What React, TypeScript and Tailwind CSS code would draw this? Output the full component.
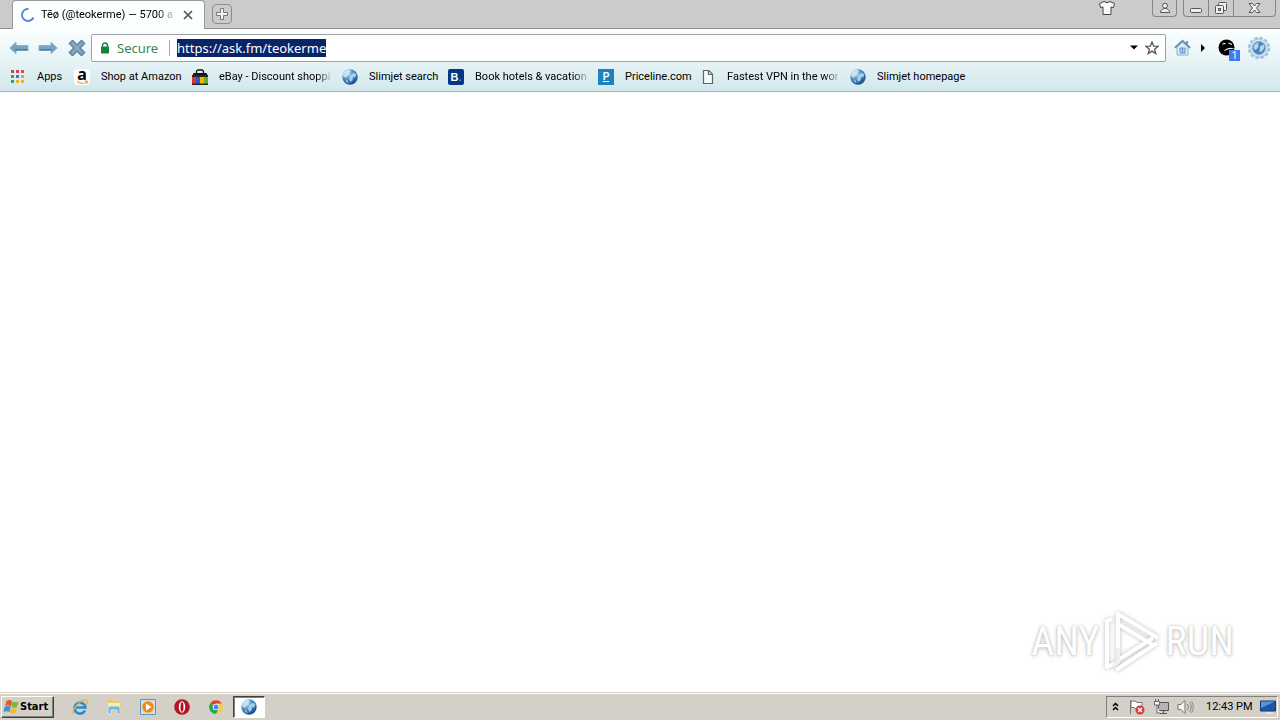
import React from "react";

const uiFont = "font-['Roboto','Noto_Sans',sans-serif]";

function Globe({ id }: { id: string }) {
  return (
    <svg width="16" height="16" viewBox="0 0 16 16" aria-hidden="true">
      <defs>
        <radialGradient id={id} cx="35%" cy="28%" r="80%">
          <stop offset="0" stopColor="#b9dcf2" />
          <stop offset="0.45" stopColor="#4f93cb" />
          <stop offset="1" stopColor="#123f7c" />
        </radialGradient>
      </defs>
      <circle cx="8" cy="8" r="7.7" fill={`url(#${id})`} />
      <path d="M1 5C2 2.5 4.500 .8 7 .6L9 2 7.500 3.500 8 5 5.500 6.500 4 8.500 1.500 8Z" fill="#d3e7f3" opacity=".85" />
      <path d="M8.500 6.500 12 3.500 14.500 5.500 13 8.500 11 8 10.500 11 8.500 13 7 10Z" fill="#c2deef" opacity=".8" />
      <path d="M3.500 10 6 11.500 6.500 14.500 4 13Z" fill="#9cc8e6" opacity=".7" />
    </svg>
  );
}

function AppsIcon() {
  const colors = ["#d6404e", "#d6404e", "#e04a3f", "#36a35c", "#3578e5", "#f0a818", "#36a35c", "#efb321", "#efb321"];
  return (
    <svg width="16" height="16" viewBox="0 0 16 16" aria-hidden="true">
      {colors.map((c, i) => (
        <rect key={i} x={1 + (i % 3) * 5} y={1 + Math.floor(i / 3) * 5} width="3" height="3" fill={c} />
      ))}
    </svg>
  );
}

function AmazonIcon() {
  return (
    <span className="relative flex size-4 justify-center rounded-sm bg-white">
      <span className="font-['Noto_Sans',sans-serif] text-[16px] leading-[10px] font-bold text-black">a</span>
      <svg className="absolute bottom-0 left-0" width="16" height="5" viewBox="0 0 16 5" aria-hidden="true">
        <path d="M3 1.500Q8 5 13 2M11 1l2.500.5-.6 2" fill="none" stroke="#f6a04b" strokeWidth="1.300" />
      </svg>
    </span>
  );
}

function BagIcon() {
  return (
    <svg width="16" height="16" viewBox="0 0 16 16" aria-hidden="true">
      <path d="M4.500 5V3Q4.500 1 6.500 1h3q2 0 2 2v2" fill="none" stroke="#111" strokeWidth="1.300" />
      <path d="M1.500 4h13L16 8H0z" fill="#151515" />
      <path d="M0 7h4v8H0z" fill="#e53238" />
      <path d="M4 7h4v8H4z" fill="#1d5fc8" />
      <path d="M8 7h4v8H8z" fill="#f5b400" />
      <path d="M12 7h4v8h-4z" fill="#6bac22" />
      <path d="M0 14.500h16V16H0zM0 6h16v2H0z" fill="#2b2720" />
    </svg>
  );
}

function BookingIcon() {
  return (
    <span className="flex size-4 items-center justify-center rounded-xs bg-[#043580] font-['Liberation_Sans',sans-serif] text-[11px] leading-4 font-bold text-white">
      B<span className="text-[#2f9de0]">.</span>
    </span>
  );
}

function PricelineIcon() {
  return (
    <span className="flex size-4 items-center justify-center bg-[#1a83bd] font-['Liberation_Sans',sans-serif] text-[10px] leading-4 font-bold text-white underline">
      P
    </span>
  );
}

function PageIcon() {
  return (
    <svg width="16" height="16" viewBox="0 0 16 16" aria-hidden="true">
      <path d="M3.500 1.500H9l3.500 3.700v9.300h-9zM8.500 1.500v4h4" fill="#f5fafa" stroke="#626666" strokeWidth="1.200" />
    </svg>
  );
}

function ArrowIcon() {
  return (
    <svg width="20" height="14" viewBox="0 0 20 14" aria-hidden="true">
      <path d="M.8 7 7 1.200V4.500H19v5H7v3.300Z" fill="#77a2c2" stroke="#8fb3cb" strokeLinejoin="round" />
      <path d="M6 8h12.500v1.500H6z" fill="#527f9f" />
    </svg>
  );
}

const fade = "[mask-image:linear-gradient(to_right,black_88%,#0003)]";

const bookmarks = [
  { label: "Apps", icon: <AppsIcon />, width: "w-16", fade: false },
  { label: "Shop at Amazon", icon: <AmazonIcon />, width: "w-[118px]", fade: false },
  { label: "eBay - Discount shoppi", icon: <BagIcon />, width: "w-[150px]", fade: true },
  { label: "Slimjet search", icon: <Globe id="g1" />, width: "w-[106px]", fade: false },
  { label: "Book hotels & vacation", icon: <BookingIcon />, width: "w-[150px]", fade: true },
  { label: "Priceline.com", icon: <PricelineIcon />, width: "w-[102px]", fade: false },
  { label: "Fastest VPN in the wor", icon: <PageIcon />, width: "w-[150px]", fade: true },
  { label: "Slimjet homepage", icon: <Globe id="g2" />, width: "w-[124px]", fade: false },
];

function TabStrip() {
  return (
    <header className="flex h-[29px] shrink-0 items-start bg-[#cbcbcb] shadow-[inset_0_-1px_0_#8e8e8e]">
      <div className="ml-3 flex h-[29px] w-[193px] items-center rounded-t border border-b-0 border-[#9a9a9a] bg-[#fcffff] pr-2 pl-[7px]">
        <svg width="16" height="16" viewBox="0 0 16 16" aria-hidden="true">
          <path d="M8.500 2A6 6 0 1 0 13.500 10.500" fill="none" stroke="#5b84dc" strokeWidth="2" />
        </svg>
        <span className="ml-[5px] flex w-[134px]">
          <span className={`text-[11px] leading-4 whitespace-nowrap ${fade}`}>Tēø (@teokerme) — 5700 a</span>
        </span>
        <button aria-label="Close tab" className="ml-[6px] flex size-4 items-center justify-center">
          <svg width="10" height="10" viewBox="0 0 10 10"><path d="m1 1 8 8M9 1 1 9" stroke="#555" strokeWidth="1.700" /></svg>
        </button>
      </div>
      <button aria-label="New tab" className="mt-1 ml-[7px] flex h-5 w-5 items-center justify-center rounded-sm border border-[#8e8e8e]">
        <svg width="14" height="14" viewBox="0 0 14 14"><path d="M5.500 1.500h3v4h4v3h-4v4h-3v-4h-4v-3h4z" fill="#f4f4f4" stroke="#777" /></svg>
      </button>
      <div className="ml-auto flex items-start">
        <button aria-label="Themes" className="mr-[37px]">
          <svg width="16" height="16" viewBox="0 0 16 16">
            <path d="M5 1.500Q8 4 11 1.500l4.500 2-1 4-2.500-.5v7.500H4V7l-2.500.5-1-4z" fill="#f9f9f9" stroke="#444" strokeLinejoin="round" />
          </svg>
        </button>
        <button aria-label="Profile" className="flex h-[17px] w-[25px] items-center justify-center rounded-b border border-t-0 border-[#858585]">
          <svg width="12" height="12" viewBox="0 0 12 12">
            <circle cx="6" cy="3.700" r="2.500" fill="#eee" stroke="#555" />
            <path d="M1.500 10.500V9L4.500 6.500h3l3 2.500v1.500z" fill="#eee" stroke="#555" strokeLinejoin="round" />
          </svg>
        </button>
        <div className="mr-1 ml-[6px] flex h-[17px] rounded-b border border-t-0 border-[#858585]">
          <button aria-label="Minimize" className="flex w-[25px] items-center justify-center border-r border-[#858585]">
            <svg width="12" height="12" viewBox="0 0 12 12"><rect x=".5" y="6.500" width="11" height="4" rx="1" fill="#eee" stroke="#555" /></svg>
          </button>
          <button aria-label="Restore" className="flex w-[25px] items-center justify-center border-r border-[#858585]">
            <svg width="14" height="14" viewBox="0 0 14 14">
              <rect x="4.500" y="1.500" width="8" height="8" rx="1" fill="#eee" stroke="#555" />
              <rect x="1.500" y="4.500" width="8" height="8" rx="1" fill="#eee" stroke="#555" />
              <rect x="4.500" y="7.500" width="2" height="2" fill="#ccc" stroke="#555" />
            </svg>
          </button>
          <button aria-label="Close" className="flex w-[41px] items-center justify-center">
            <svg width="13" height="12" viewBox="0 0 13 12">
              <path d="M1 1.500h3.500l2 2.500L8.500 1.500H12L8.500 6l3.500 4.500H8.500L6.500 8l-2 2.500H1L4.500 6z" fill="#f2f2f2" stroke="#555" strokeLinejoin="round" />
            </svg>
          </button>
        </div>
      </div>
    </header>
  );
}

function Toolbar() {
  return (
    <div className="flex h-[33px] items-center pt-1">
      <button aria-label="Back" className="ml-[9px]"><ArrowIcon /></button>
      <button aria-label="Forward" className="ml-[9px] rotate-180"><span className="block -scale-y-100"><ArrowIcon /></span></button>
      <button aria-label="Stop" className="ml-[10px]">
        <svg width="18" height="18" viewBox="0 0 18 18">
          <path d="M1 4.500 4.500 1 9 5.500 13.500 1 17 4.500 12.500 9 17 13.500 13.500 17 9 12.500 4.500 17 1 13.500 5.500 9Z" fill="#6c93b2" stroke="#4d7290" strokeLinejoin="round" />
          <path d="m4 4 10 10M14 4 4 14" stroke="#89abc6" strokeWidth="2" />
        </svg>
      </button>
      <div className="ml-[5px] flex h-7 flex-1 items-center rounded-xs border border-[#9ba3a6] bg-white pr-[6px] pl-2">
        <svg width="10" height="12" viewBox="0 0 10 12" aria-hidden="true">
          <path d="M2.500 5V3.500a2.500 2.500 0 0 1 5 0V5" fill="none" stroke="#16823b" strokeWidth="1.400" />
          <rect x="1" y="4.500" width="8" height="7" rx=".7" fill="#16823b" />
        </svg>
        <span className="ml-[7px] w-[52px] font-['Noto_Sans',sans-serif] text-[13px] leading-[18px] text-[#35864f]">Secure</span>
        <span className="h-4 w-px bg-[#aaa]" />
        <div className="ml-[7px] flex flex-1 items-center">
          <div
            role="textbox"
            aria-label="Address"
            contentEditable
            suppressContentEditableWarning
            spellCheck={false}
            className="bg-[#0a246a] font-['Noto_Sans',sans-serif] text-[13px] leading-[18px] whitespace-nowrap text-white"
          >
            https://ask.fm/teokerme
          </div>
        </div>
        <button aria-label="Address history" className="mr-[7px]">
          <svg width="8" height="5" viewBox="0 0 8 5"><path d="M0 .5h8l-4 4z" /></svg>
        </button>
        <button aria-label="Bookmark this page">
          <svg width="14" height="14" viewBox="0 0 14 14">
            <path d="m7 1 1.600 4.100 4.400.3-3.400 2.800 1.100 4.300L7 10.100l-3.700 2.400 1.100-4.300L1 5.400l4.400-.3z" fill="white" stroke="#555" strokeWidth="1.300" />
          </svg>
        </button>
      </div>
      <button aria-label="Home" className="ml-2">
        <svg width="17" height="17" viewBox="0 0 17 17">
          <path d="M3 8v8h11V8L8.500 3z" fill="#dcedf7" stroke="#88b2d0" />
          <path d="m.8 8.800 7.700-7 7.700 7M13 5.500V2" fill="none" stroke="#688fae" strokeWidth="1.800" />
          <path d="M6 9h5v5H6zM8.500 9v5" fill="#bcd9ec" stroke="#5c91bd" />
        </svg>
      </button>
      <button aria-label="More buttons" className="ml-[10px]">
        <svg width="5" height="8" viewBox="0 0 5 8"><path d="M0 0v8l4-4z" /></svg>
      </button>
      <button aria-label="Blocker, 1 item" className="relative ml-3 size-[18px]">
        <svg width="18" height="18" viewBox="0 0 18 18">
          <circle cx="8.500" cy="8.500" r="8" />
          <path d="m4.500 5 3-.7M10.500 4l3.500 1.500" fill="none" stroke="#e7f3f5" strokeWidth="1.200" />
          <path d="M6 11.500Q10 7.500 16.500 9.500L13 10Q8.500 10 7 12z" fill="#f4fbfc" />
        </svg>
        <span className="absolute top-[11px] left-[11px] h-[11px] w-[11px] bg-[#4479f0] text-center text-[10px] leading-[11px] text-white">1</span>
      </button>
      <button aria-label="Menu" className="mr-[9px] ml-[11px]">
        <svg width="24" height="24" viewBox="0 0 24 24">
          <circle cx="12" cy="12" r="10" fill="none" stroke="#a0c4e0" strokeWidth="2.500" strokeDasharray="3.500 1.736" />
          <circle cx="12" cy="12" r="9" fill="#cfe4f2" stroke="#a4c8e2" />
          <circle cx="12" cy="12" r="6.500" fill="#4583b8" stroke="#82add0" />
          <path d="M6.500 10q2-3.500 5.500-3.500l-1 2.500 1 1-3 4-2-1zM13 10l4-1.500.5 3-2.500 4-2.500.5z" fill="#b4d3e9" />
        </svg>
      </button>
    </div>
  );
}

function BookmarkBar() {
  return (
    <nav aria-label="Bookmarks" className="flex h-[29px] items-center overflow-hidden pl-[10px]">
      {bookmarks.map((b) => (
        <a key={b.label} href="#" className={`flex shrink-0 items-center gap-[11px] ${b.width}`}>
          <span className="shrink-0">{b.icon}</span>
          <span className={`text-[11px] leading-4 whitespace-nowrap ${b.fade ? fade : ""}`}>{b.label}</span>
        </a>
      ))}
    </nav>
  );
}

function Watermark() {
  const text = "font-['Liberation_Sans_Narrow','Roboto_Condensed','Liberation_Sans',sans-serif] text-[40px] leading-[60px] text-white [text-shadow:0_0_2px_#b8b8b8,0_1px_4px_#c4c4c4]";
  return (
    <div className="absolute right-[46px] bottom-[18px] flex items-center">
      <span className={text}>ANY</span>
      <svg width="62" height="64" viewBox="0 0 62 64" className="drop-shadow-[0_0_2px_#bbbbbb]" aria-hidden="true">
        <path d="M18 40V4l40 24M18 14l35 21M12 9 7 11v46l9-4M16 60l41-27M18 50l35-22" fill="none" stroke="white" strokeWidth="4" strokeLinejoin="round" />
        <path d="M18 38v14l-5 4" fill="none" stroke="#f1f1f1" strokeWidth="4" />
      </svg>
      <span className={`ml-1 ${text}`}>RUN</span>
    </div>
  );
}

function Taskbar() {
  return (
    <footer className="flex h-7 shrink-0 items-center border-t border-[#d4d0c8] bg-[#d4d0c8] shadow-[inset_0_1px_0_white]">
      <button className="mt-px ml-px flex h-[22px] w-[53px] items-center border border-t-white border-r-[#404040] border-b-[#404040] border-l-white pl-[1px] font-['DejaVu_Sans_Condensed','Noto_Sans',sans-serif] text-[11px] font-bold shadow-[inset_-1px_-1px_0_#808080]">
        <svg width="17" height="16" viewBox="0 0 17 16" aria-hidden="true">
          <path d="M3.500 2q3-2 5.500 0L8 7.500Q5 5.500 2 7z" fill="#e9562a" />
          <path d="M9.500 2.500q3 1.500 6 0L14 8q-3 1.500-5.500-.3z" fill="#79b93c" />
          <path d="M1.700 7.800q3-1.500 6 0L6.500 13q-3-1.500-6 0z" fill="#3f8ed8" />
          <path d="M8.200 8.500q3 2 5.700.5L12.500 14q-3 1.500-5.500-.5z" fill="#f5bd27" />
        </svg>
        Start
      </button>
      <div className="mt-px ml-[18px] flex items-center gap-[18px]">
        <button aria-label="Internet Explorer">
          <svg width="16" height="16" viewBox="0 0 16 16">
            <path d="M13 11.500A5.500 5.500 0 1 1 13.500 8.500H4" fill="none" stroke="#288bd4" strokeWidth="2.600" />
            <path d="M2 15Q-1 13 5 6T14.500 1.500Q16 3 14 6" fill="none" stroke="#e2b73b" strokeWidth="1.200" />
          </svg>
        </button>
        <button aria-label="Explorer">
          <svg width="16" height="16" viewBox="0 0 16 16">
            <path d="M1 3 2 1h5l1 2h7v10H1z" fill="#e8cc6c" />
            <path d="M2 4h12v5H2z" fill="#fff0a9" />
            <path d="M2 15V9q0-2 2-2h8q2 0 2 2v6h-3v-4H5v4z" fill="#73b9df" stroke="#d3edfa" strokeWidth=".8" />
          </svg>
        </button>
        <button aria-label="Media Player">
          <svg width="16" height="16" viewBox="0 0 16 16">
            <path d="M.5.5h15v15H.5z" fill="#c9e1f4" stroke="#5898d1" />
            <circle cx="8" cy="8" r="6" fill="#f08a1d" stroke="#ffc66a" />
            <path d="m6 4.500 5.500 3.500L6 11.500z" fill="white" />
          </svg>
        </button>
        <button aria-label="Opera">
          <svg width="16" height="16" viewBox="0 0 16 16">
            <circle cx="8" cy="8" r="7.800" fill="#b71525" />
            <ellipse cx="8" cy="8" rx="3.200" ry="5.800" fill="white" />
            <ellipse cx="8" cy="8" rx="1.500" ry="4.800" fill="#a21420" />
          </svg>
        </button>
        <button aria-label="Chrome">
          <svg width="16" height="16" viewBox="0 0 16 16">
            <circle cx="8" cy="8" r="6.800" fill="#fc3" />
            <path d="M8 8 2.100 4.600A6.800 6.800 0 0 1 13.900 4.600H8z" fill="#db4437" />
            <path d="M8 8 2.100 4.600A6.800 6.800 0 0 0 8 14.800l3-5.300z" fill="#24a35a" />
            <circle cx="8" cy="8" r="3.300" fill="white" />
            <circle cx="8" cy="8" r="2.500" fill="#4285f4" />
          </svg>
        </button>
      </div>
      <button aria-label="Slimjet" className="mt-px ml-[9px] flex h-[22px] w-8 items-center justify-center border border-t-[#404040] border-r-white border-b-white border-l-[#404040] bg-white shadow-[inset_1px_1px_0_#808080]">
        <Globe id="g3" />
      </button>
      <div className="mt-px mr-[2px] ml-auto flex h-[22px] w-[172px] items-center border border-t-[#808080] border-r-white border-b-white border-l-[#808080] pl-[5px] whitespace-nowrap">
        <button aria-label="Show hidden icons">
          <svg width="7" height="10" viewBox="0 0 7 10"><path d="m1 4 2.500-2.500L6 4M1 8l2.500-2.500L6 8" fill="none" stroke="black" strokeWidth="1.500" /></svg>
        </button>
        <button aria-label="Action center" className="ml-[10px]">
          <svg width="16" height="16" viewBox="0 0 16 16">
            <path d="M1.500 1v14M2 2h4l2 1.500h5V10H7L5 8.500H2z" fill="white" stroke="#777" />
            <circle cx="11" cy="11" r="4.500" fill="#d93a35" />
            <path d="m9 9 4 4M13 9l-4 4" stroke="white" strokeWidth="1.500" />
          </svg>
        </button>
        <button aria-label="Network" className="ml-2">
          <svg width="16" height="16" viewBox="0 0 16 16">
            <path d="M5.500 3.500h10v8h-10zM7 14.500h7M10.500 12v2" fill="#b5b5b5" stroke="#555" />
            <path d="M1.500 2.500h5V6h-5zM2.500 0v2M5.500 0v2M4 6v8h3" fill="white" stroke="#666" />
          </svg>
        </button>
        <button aria-label="Volume" className="ml-2">
          <svg width="17" height="16" viewBox="0 0 17 16">
            <path d="M1 5.500h3l4-4v13l-4-4H1z" fill="#f4f4f4" stroke="#777" />
            <path d="M10.500 5q2 3 0 6M12.500 3q3.500 5 0 10M14.500 2q3.500 6 0 12" fill="none" stroke="#888" />
          </svg>
        </button>
        <time className="ml-3 w-[46px] text-[11px] leading-4">12:43 PM</time>
        <button aria-label="Show desktop" className="ml-2">
          <svg width="16" height="14" viewBox="0 0 16 14">
            <path d="M.5 1h15v10H.5z" fill="#1c57ab" stroke="#12396f" />
            <path d="M1 1.500h14L1 8z" fill="#5794da" />
            <path d="M6 12h7v2H6z" fill="#e4e4e4" />
          </svg>
        </button>
      </div>
    </footer>
  );
}

export default function App() {
  return (
    <div className={`flex min-h-screen flex-col overflow-hidden bg-white text-black ${uiFont}`}>
      <TabStrip />
      <div className="h-[63px] shrink-0 border-b border-[#a5b5b9] bg-linear-to-b from-[#fbffff] to-[#d3e8ec]">
        <Toolbar />
        <BookmarkBar />
      </div>
      <main className="relative flex-1 bg-white">
        <Watermark />
      </main>
      <Taskbar />
    </div>
  );
}
